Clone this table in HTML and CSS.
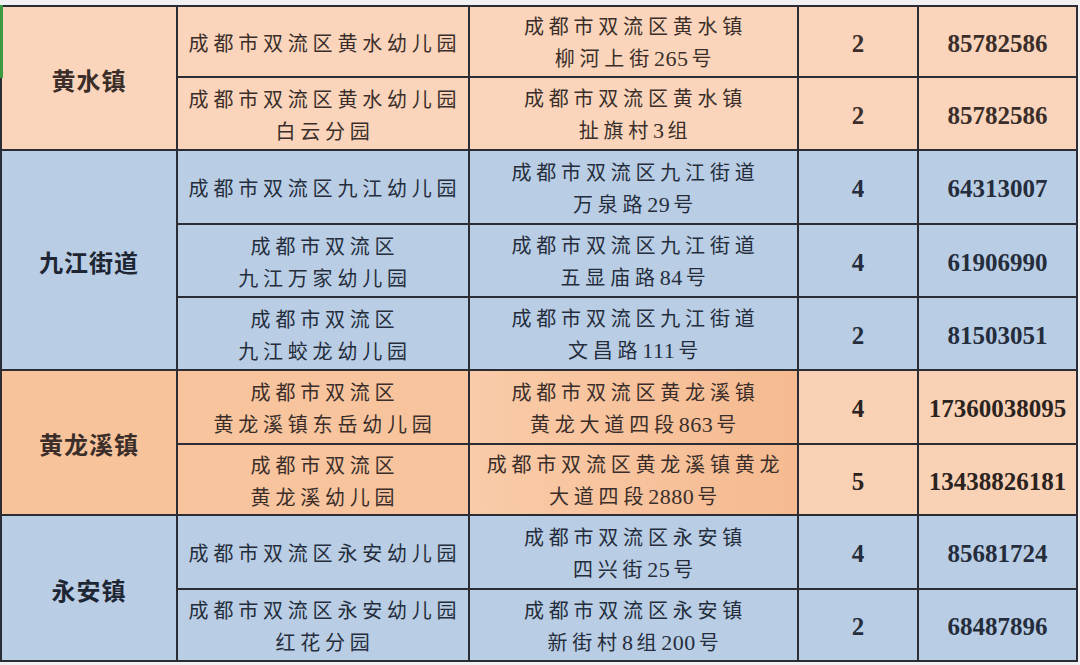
FILE: index.html
```html
<!DOCTYPE html>
<html lang="zh">
<head>
<meta charset="utf-8">
<link rel="stylesheet" href="styles.css">
</head>
<body>
<div class="sheet">
  <div class="town peach r1">黄水镇</div>
  <div class="cell name peach"><div>成都市双流区黄水幼儿园</div></div>
  <div class="cell addr peach"><div>成都市双流区黄水镇<br>柳河上街<span class="d">265</span>号</div></div>
  <div class="cell num peach">2</div>
  <div class="cell tel peach">85782586</div>
  <div class="cell name peach"><div>成都市双流区黄水幼儿园<br>白云分园</div></div>
  <div class="cell addr peach"><div>成都市双流区黄水镇<br>扯旗村<span class="d">3</span>组</div></div>
  <div class="cell num peach">2</div>
  <div class="cell tel peach">85782586</div>

  <div class="town blue r3">九江街道</div>
  <div class="cell name blue"><div>成都市双流区九江幼儿园</div></div>
  <div class="cell addr blue"><div>成都市双流区九江街道<br>万泉路<span class="d">29</span>号</div></div>
  <div class="cell num blue">4</div>
  <div class="cell tel blue">64313007</div>
  <div class="cell name blue"><div>成都市双流区<br>九江万家幼儿园</div></div>
  <div class="cell addr blue"><div>成都市双流区九江街道<br>五显庙路<span class="d">84</span>号</div></div>
  <div class="cell num blue">4</div>
  <div class="cell tel blue">61906990</div>
  <div class="cell name blue"><div>成都市双流区<br>九江蛟龙幼儿园</div></div>
  <div class="cell addr blue"><div>成都市双流区九江街道<br>文昌路<span class="d">111</span>号</div></div>
  <div class="cell num blue">2</div>
  <div class="cell tel blue">81503051</div>

  <div class="town orange r6">黄龙溪镇</div>
  <div class="cell name orange"><div>成都市双流区<br>黄龙溪镇东岳幼儿园</div></div>
  <div class="cell addr orange-deep"><div>成都市双流区黄龙溪镇<br>黄龙大道四段<span class="d">863</span>号</div></div>
  <div class="cell num orange-light">4</div>
  <div class="cell tel orange-light">17360038095</div>
  <div class="cell name orange"><div>成都市双流区<br>黄龙溪幼儿园</div></div>
  <div class="cell addr orange-deep"><div>成都市双流区黄龙溪镇黄龙<br>大道四段<span class="d">2880</span>号</div></div>
  <div class="cell num orange-light">5</div>
  <div class="cell tel orange-light">13438826181</div>

  <div class="town blue r8">永安镇</div>
  <div class="cell name blue"><div>成都市双流区永安幼儿园</div></div>
  <div class="cell addr blue"><div>成都市双流区永安镇<br>四兴街<span class="d">25</span>号</div></div>
  <div class="cell num blue">4</div>
  <div class="cell tel blue">85681724</div>
  <div class="cell name blue"><div>成都市双流区永安幼儿园<br>红花分园</div></div>
  <div class="cell addr blue"><div>成都市双流区永安镇<br>新街村<span class="d">8</span>组<span class="d">200</span>号</div></div>
  <div class="cell num blue">2</div>
  <div class="cell tel blue">68487896</div>
</div>
</body>
</html>
```

FILE: styles.css
```css
html, body {
  margin: 0;
  padding: 0;
  background: #f1f1f1;
}
body {
  padding-top: 5px;
  width: 1080px;
  height: 660px;
  overflow: hidden;
}
.sheet {
  position: relative;
  width: 1074px;
  display: grid;
  grid-template-columns: 174px 290px 327px 118px 157px;
  grid-template-rows: 69px 71px 72px 71px 71px 72px 69px 72px 70px;
  gap: 2px;
  padding: 2px;
  background: #2c2c34;
}
.sheet::before {
  content: "";
  position: absolute;
  left: 0;
  top: 0;
  width: 3px;
  height: 73px;
  background: #3e9a42;
}
.cell, .town {
  display: flex;
  align-items: center;
  justify-content: center;
  text-align: center;
}
.town {
  font-family: "Noto Sans CJK SC", sans-serif;
  font-weight: 700;
  font-size: 24px;
  letter-spacing: 1px;
  color: #2b2320;
  padding-top: 2px;
}
.r1 { grid-row: 1 / span 2; }
.r3 { grid-row: 3 / span 3; }
.r6 { grid-row: 6 / span 2; }
.r8 { grid-row: 8 / span 2; }
.name, .addr {
  font-family: "Noto Sans CJK SC", sans-serif;
  font-weight: 400;
  font-size: 20px;
  letter-spacing: 4.8px;
  line-height: 32px;
  padding-left: 4px;
  padding-top: 2px;
}
.d {
  font-family: "Liberation Serif", "Times New Roman", serif;
  font-size: 22px;
  letter-spacing: 0.5px;
  margin-right: 3px;
}
.num, .tel {
  font-family: "Liberation Serif", "Times New Roman", serif;
  font-weight: 700;
  font-size: 25px;
  padding-top: 4px;
}
.peach { background: #fad5bb; color: #3b2e2a; }
.blue { background: #b9cde5; color: #252d3c; }
.orange { background: #f8c49d; color: #3b2e2a; }
.orange-deep {
  background: linear-gradient(to right, #f9cba8, #f5ba90);
  color: #3b2e2a;
}
.orange-light { background: #f9d1b5; color: #2b2320; }
.town.blue { color: #1f2633; }
.town.orange { background: #f7c39b; }
```
